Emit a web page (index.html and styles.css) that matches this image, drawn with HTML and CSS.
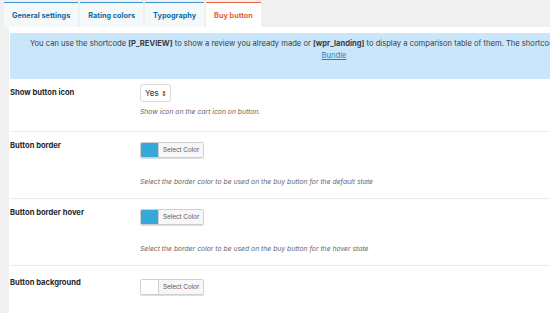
FILE: index.html
```
<!DOCTYPE html>
<html lang="en">
<head>
  <meta charset="UTF-8" />
  <title>Buy button settings</title>
  <link rel="stylesheet" href="styles.css">
</head>
<body>
  <nav class="tabs">
    <a class="tab" href="#">General settings</a>
    <a class="tab" href="#">Rating colors</a>
    <a class="tab" href="#">Typography</a>
    <a class="tab active" href="#">Buy button</a>
  </nav>
  <main class="panel">
    <div class="notice">
      <p class="notice-line">You can use the shortcode <b>[P_REVIEW]</b> to show a review you already made or <b>[wpr_landing]</b> to display a comparison table of them. The shortcodes are available in the Pro</p>
      <p><a href="#">Bundle</a></p>
    </div>

    <div class="row">
      <div class="label">Show button icon</div>
      <div class="field">
        <div class="select">Yes <span class="arrows">&#8661;</span></div>
        <p class="desc first">Show icon on the cart icon on button.</p>
      </div>
    </div>

    <div class="row">
      <div class="label">Button border</div>
      <div class="field">
        <div class="picker"><span class="swatch blue"></span><span class="pick-btn">Select Color</span></div>
        <p class="desc">Select the border color to be used on the buy button for the default state</p>
      </div>
    </div>

    <div class="row">
      <div class="label">Button border hover</div>
      <div class="field">
        <div class="picker"><span class="swatch blue"></span><span class="pick-btn">Select Color</span></div>
        <p class="desc">Select the border color to be used on the buy button for the hover state</p>
      </div>
    </div>

    <div class="row last">
      <div class="label">Button background</div>
      <div class="field">
        <div class="picker"><span class="swatch"></span><span class="pick-btn">Select Color</span></div>
      </div>
    </div>
  </main>
</body>
</html>
```

FILE: styles.css
```
html, body { margin: 0; padding: 0; }
body { background: #f0f0f0; font-family: Inter, "Liberation Sans", sans-serif; font-size: 7.5px; color: #23282d; overflow: hidden; width: 550px; height: 313px; }
p { margin: 0; }

.tabs { display: flex; gap: 2px; padding: 2px 0 0 4px; height: 27px; box-sizing: border-box; }
.tab { display: block; padding: 0 8px; line-height: 26px; background: #f6f9fa; border-top: 1px solid #3d96d2; color: #0a6aa3; font-weight: 700; font-size: 7.3px; text-decoration: none; }
.tab.active { background: #fff; border-top-color: #e8603c; color: #e8603c; }

.panel { background: #fff; margin-left: 9px; width: 700px; height: 300px; padding-left: 1px; box-sizing: border-box; }
.panel::before { content: ""; display: table; }

.notice { margin-top: 6px; width: 648px; box-sizing: border-box; padding: 5px 20px 17px; background: #c9e6fb; color: #3c3c3c; text-align: center; line-height: 12px; font-size: 7.6px; }
.notice-line { white-space: nowrap; }
.notice a { color: #2b7fc0; }

.row { display: flex; border-bottom: 1px solid #ececec; padding: 5px 0 10px; }
.row.last { border-bottom: 0; padding-top: 8px; }
.label { width: 130px; padding-top: 3px; line-height: 12px; font-weight: 700; font-size: 7.6px; }
.field { flex: 1; }

.select { display: inline-flex; align-items: center; gap: 2px; height: 18px; box-sizing: border-box; padding: 0 3px 0 4px; border: 1px solid #dcdcdc; border-radius: 3px; font-size: 8px; color: #222; }
.arrows { font-size: 7px; }

.desc { margin-top: 17px; line-height: 12px; font-style: italic; color: #666; font-size: 6.8px; }
.desc.first { margin-top: 4px; padding-bottom: 3px; }

.picker { display: inline-flex; margin-top: 5px; height: 16px; border: 1px solid #cfcfcf; border-radius: 2px; box-sizing: border-box; box-shadow: 0 1px 0 #ddd; overflow: hidden; }
.swatch { width: 17px; background: #fff; border-right: 1px solid #cfcfcf; }
.swatch.blue { background: #36a9dc; }
.pick-btn { display: flex; align-items: center; padding: 0 4px; background: #f7f7f7; color: #555; font-size: 6.3px; }
```
